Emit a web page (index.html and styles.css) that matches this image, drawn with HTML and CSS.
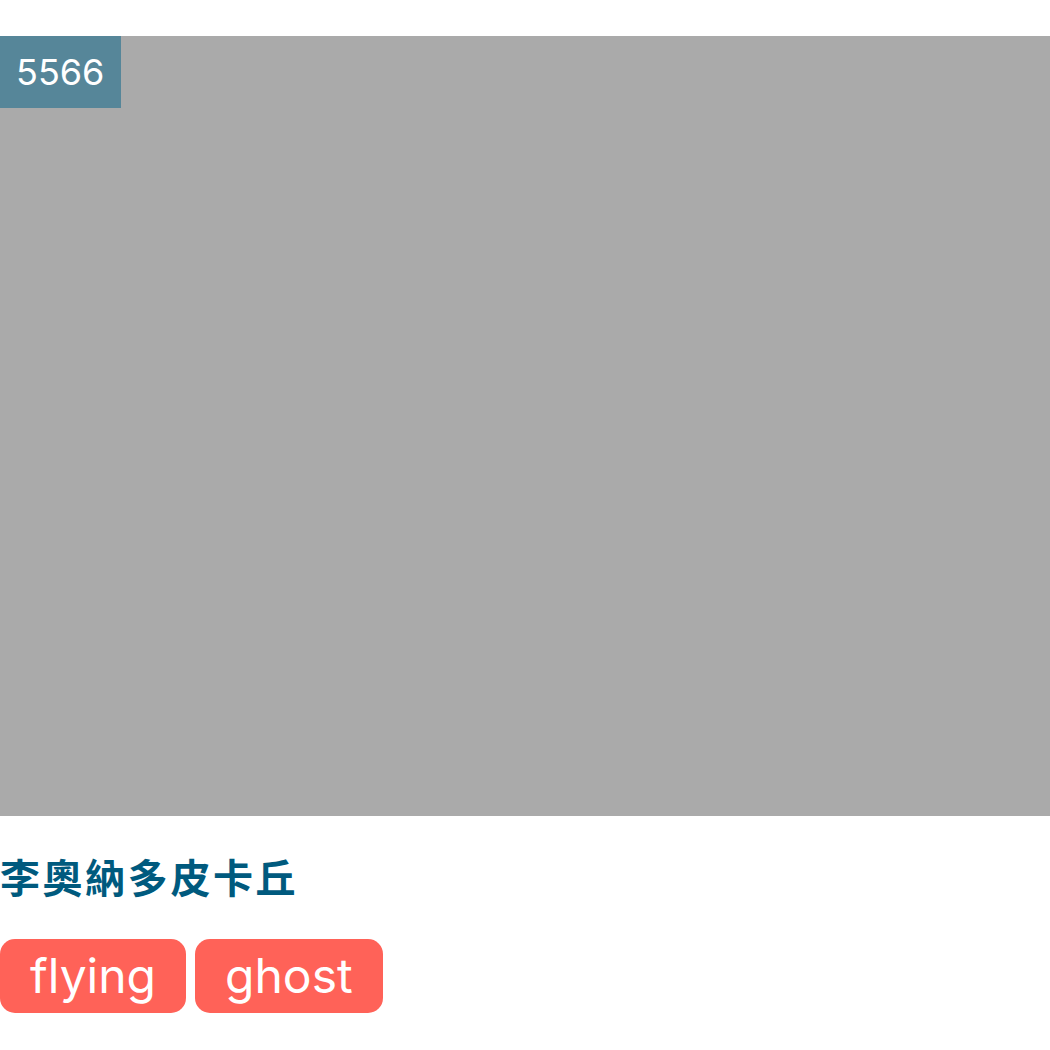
FILE: index.html
```html
<!DOCTYPE html>
<html lang="zh-Hant">
<head>
<meta charset="utf-8">
<link rel="stylesheet" href="styles.css">
</head>
<body>
<div class="card">
  <div class="media">
    <span class="badge">5566</span>
  </div>
  <h2 class="title">李奧納多皮卡丘</h2>
  <div class="tags">
    <span class="tag">flying</span>
    <span class="tag">ghost</span>
  </div>
</div>
</body>
</html>
```
FILE: styles.css
```css
html, body {
  margin: 0;
  padding: 0;
  background: #ffffff;
}
body {
  font-family: Inter, "Noto Sans", "Noto Sans CJK TC", sans-serif;
}
.card {
  padding-top: 36px;
}
.media {
  position: relative;
  height: 780px;
  background: #aaaaaa;
}
.badge {
  position: absolute;
  left: 0;
  top: 0;
  height: 72px;
  padding: 0 17px 0 16px;
  box-sizing: border-box;
  display: flex;
  align-items: center;
  background: #568699;
  color: #ffffff;
  font-size: 36px;
  line-height: 1;
}
.title {
  margin: 36px 0 0 0;
  font-family: "Noto Sans CJK TC", sans-serif;
  font-size: 40px;
  line-height: 48px;
  letter-spacing: 2.6px;
  font-weight: 700;
  color: #005a7e;
}
.tags {
  display: flex;
  gap: 9px;
  margin-top: 39px;
}
.tag {
  display: flex;
  align-items: center;
  height: 74px;
  padding: 0 30px 0 30px;
  box-sizing: border-box;
  border-radius: 15px;
  background: #ff6258;
  color: #ffffff;
  font-size: 48px;
  line-height: 1;
}
```
